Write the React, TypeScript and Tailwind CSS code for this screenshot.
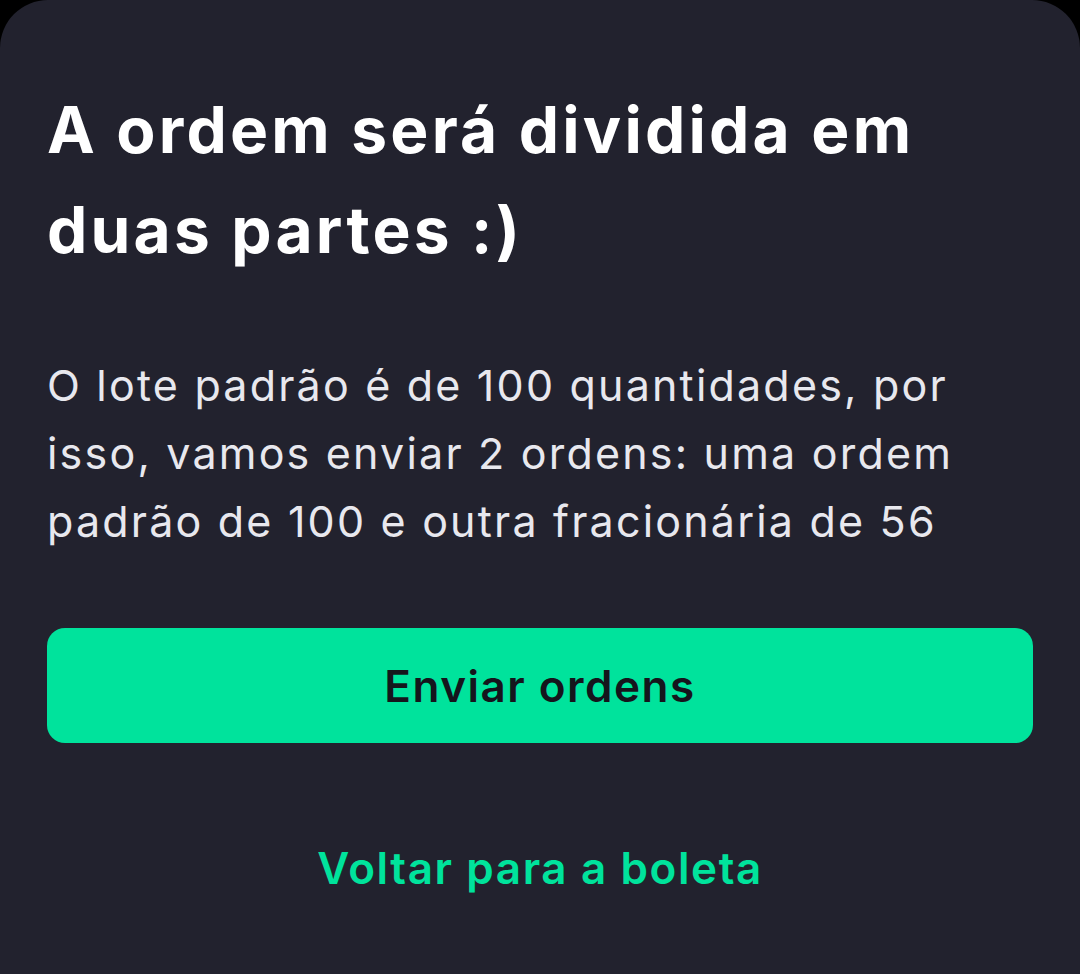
import React from "react";

export default function App() {
  return (
    <div className="w-[1080px] h-[974px] bg-black overflow-hidden" style={{ fontFamily: "Inter, 'Noto Sans', sans-serif" }}>
      <div className="w-full h-full bg-[#22222e] rounded-t-[48px] px-[47px] pt-[80px] flex flex-col">
        <h1 className="text-[64px] leading-[100px] font-bold text-white whitespace-nowrap tracking-[3.2px]">
          A ordem será dividida em
          <br />
          duas partes :)
        </h1>
        <p className="mt-[71px] text-[43px] leading-[68px] text-[#e8e8ee] whitespace-nowrap tracking-[2.2px]">
          O lote padrão é de 100 quantidades, por
          <br />
          isso, vamos enviar 2 ordens: uma ordem
          <br />
          padrão de 100 e outra fracionária de 56
        </p>
        <button className="mt-[73px] h-[115px] w-full shrink-0 rounded-[18px] bg-[#00e39c] text-[44px] font-semibold text-[#15151c] tracking-[1.5px]">
          Enviar ordens
        </button>
        <div className="mt-[101px] text-center text-[44px] leading-[48px] font-semibold text-[#00e39c] tracking-[1.6px]">
          Voltar para a boleta
        </div>
      </div>
    </div>
  );
}
